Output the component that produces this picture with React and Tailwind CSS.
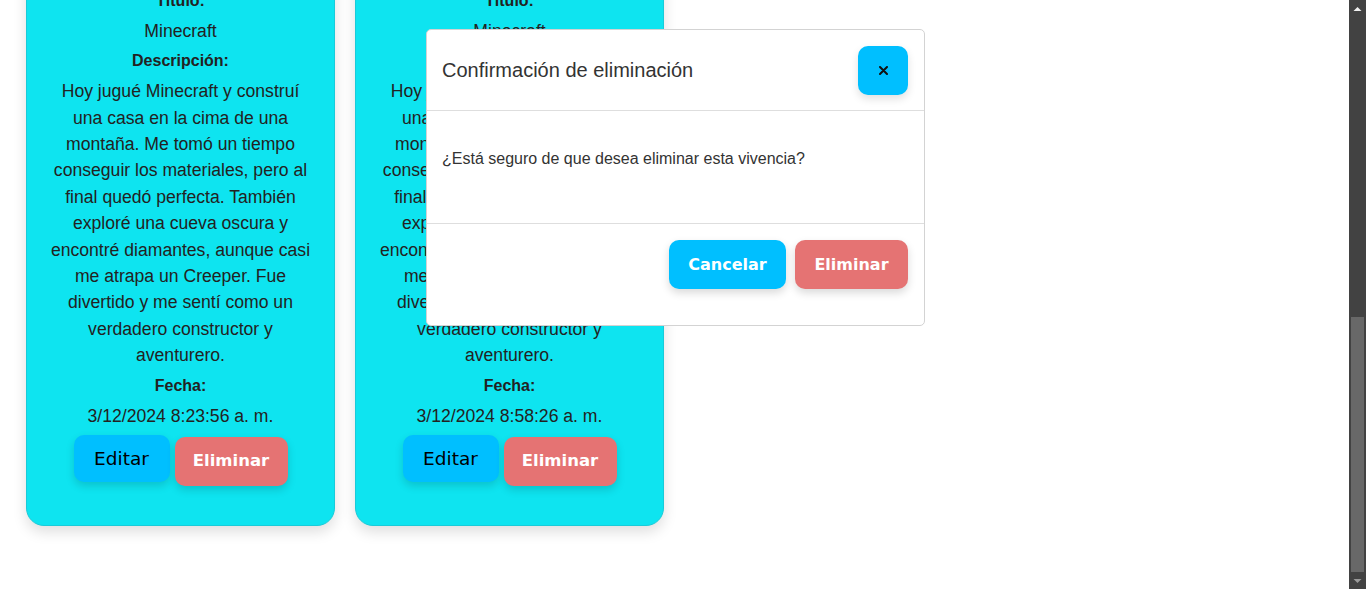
import React from "react";

const DESC =
  "Hoy jugué Minecraft y construí una casa en la cima de una montaña. Me tomó un tiempo conseguir los materiales, pero al final quedó perfecta. También exploré una cueva oscura y encontré diamantes, aunque casi me atrapa un Creeper. Fue divertido y me sentí como un verdadero constructor y aventurero.";

function Card({ date }) {
  return (
    <div className="w-[309px] shrink-0 rounded-[18px] border border-[#19cbd9] bg-[#0ee4f0] px-[22px] pb-[39px] pt-[20px] text-center text-[#222] shadow-[0_6px_14px_rgba(0,0,0,0.13)] font-['Liberation_Sans',Arial,sans-serif]">
      <div className="flex flex-col gap-[5px]">
        <p className="text-[16px] font-bold leading-[24px]">Título:</p>
        <p className="text-[17.6px] leading-[26.4px]">Minecraft</p>
        <p className="text-[16px] font-bold leading-[24px]">Descripción:</p>
        <p className="text-[17.6px] leading-[26.4px]">{DESC}</p>
        <p className="text-[16px] font-bold leading-[24px]">Fecha:</p>
        <p className="text-[17.6px] leading-[26.4px]">{date}</p>
      </div>
      <div className="mt-[6px] flex items-start justify-center gap-[5px] font-['Comic_Sans_MS','DejaVu_Sans',sans-serif]">
        <button className="flex h-[47px] w-[96px] items-center justify-center rounded-[10px] bg-[#00bfff] text-[18.5px] text-black shadow-[0_4px_8px_rgba(0,0,0,0.15)]">
          Editar
        </button>
        <button className="mt-[2px] flex h-[49px] w-[113px] items-center justify-center rounded-[10px] bg-[#e57373] text-[16.5px] font-bold text-white shadow-[0_4px_8px_rgba(0,0,0,0.15)]">
          Eliminar
        </button>
      </div>
    </div>
  );
}

function Modal() {
  return (
    <div className="absolute left-[426px] top-[29px] w-[499px] rounded-[5px] border border-[#d3d3d3] bg-white font-['Liberation_Sans',Arial,sans-serif] text-[#333]">
      <div className="flex h-[81px] items-center justify-between border-b border-[#dedede] pl-[15px] pr-[16px]">
        <h5 className="text-[20px] leading-[30px] text-[#333]">Confirmación de eliminación</h5>
        <button className="flex h-[49px] w-[50px] items-center justify-center rounded-[10px] bg-[#00bfff] shadow-[0_4px_8px_rgba(0,0,0,0.12)]">
          <svg width="9" height="9" viewBox="0 0 9 9">
            <path d="M1 1 L8 8 M8 1 L1 8" stroke="#111" strokeWidth="2" strokeLinecap="round" />
          </svg>
        </button>
      </div>
      <div className="h-[113px] border-b border-[#dedede] pl-[15px] pt-[36px]">
        <p className="text-[16px] leading-[24px] text-[#333]">¿Está seguro de que desea eliminar esta vivencia?</p>
      </div>
      <div className="flex justify-end gap-[9px] pb-[36px] pr-[16px] pt-[16px] font-['Comic_Sans_MS','DejaVu_Sans',sans-serif]">
        <button className="flex h-[49px] w-[117px] items-center justify-center rounded-[10px] bg-[#00bfff] text-[16px] font-bold text-white shadow-[0_4px_8px_rgba(0,0,0,0.15)]">
          Cancelar
        </button>
        <button className="flex h-[49px] w-[113px] items-center justify-center rounded-[10px] bg-[#e57373] text-[16px] font-bold text-white shadow-[0_4px_8px_rgba(0,0,0,0.15)]">
          Eliminar
        </button>
      </div>
    </div>
  );
}

function Scrollbar() {
  return (
    <div className="flex h-full w-[17px] shrink-0 flex-col bg-[#424242]">
      <div className="flex h-[17px] items-center justify-center">
        <svg width="9" height="6" viewBox="0 0 9 6">
          <path d="M0.5 5 L4.5 1 L8.5 5 Z" fill="#f0f0f0" />
        </svg>
      </div>
      <div className="flex flex-1 flex-col justify-end px-[2px] pb-[1px]">
        <div className="h-[255px] bg-[#686868]" />
      </div>
      <div className="flex h-[16px] items-center justify-center">
        <svg width="9" height="6" viewBox="0 0 9 6">
          <path d="M0.5 1 L4.5 5 L8.5 1 Z" fill="#9a9a9a" />
        </svg>
      </div>
    </div>
  );
}

export default function App() {
  return (
    <div className="flex h-[589px] w-full overflow-hidden bg-white">
      <div className="relative flex h-full flex-1 flex-col justify-end overflow-hidden">
        <div className="flex shrink-0 items-end gap-[20px] pb-[63px] pl-[26px]">
          <Card date="3/12/2024 8:23:56 a. m." />
          <Card date="3/12/2024 8:58:26 a. m." />
        </div>
        <Modal />
      </div>
      <Scrollbar />
    </div>
  );
}
